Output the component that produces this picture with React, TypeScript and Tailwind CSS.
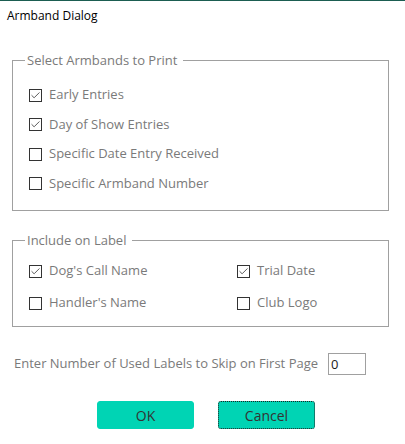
import { Check } from "lucide-react"

const ARMBAND_OPTIONS = [
  { label: "Early Entries", checked: true },
  { label: "Day of Show Entries", checked: true },
  { label: "Specific Date Entry Received", checked: false },
  { label: "Specific Armband Number", checked: false },
]

const LABEL_OPTIONS = [
  { label: "Dog's Call Name", checked: true },
  { label: "Trial Date", checked: true },
  { label: "Handler's Name", checked: false },
  { label: "Club Logo", checked: false },
]

const Box = ({ checked }: { checked: boolean }) => (
  <span className="flex h-[13px] w-[13px] shrink-0 items-center justify-center border border-[#333333] bg-white">
    {checked && <Check className="h-[11px] w-[11px] text-[#333333]" strokeWidth={1.75} />}
  </span>
)

const Option = ({ label, checked }: { label: string; checked: boolean }) => (
  <label className="flex h-[20px] items-center gap-[7px]">
    <Box checked={checked} />
    <span>{label}</span>
  </label>
)

export default function App() {
  return (
    <div
      className="h-[444px] w-[405px] overflow-hidden border-t border-[#1b5d51] bg-white text-[13px] text-[#7a7a7a]"
      style={{ fontFamily: '"Open Sans", "Noto Sans", sans-serif' }}
    >
      <div className="pl-[7px] pt-[7px] text-[12px] leading-[16px] text-black">Armband Dialog</div>

      <fieldset className="mx-[12px] mt-[27px] h-[160px] w-[377px] border border-[#a0a0a0] pl-[16px]">
        <legend className="ml-[-4px] pl-[2px] pr-[6px] leading-[18px]">Select Armbands to Print</legend>
        <div className="mt-[16px] flex flex-col gap-[9.5px]">
          {ARMBAND_OPTIONS.map((o) => (
            <Option key={o.label} {...o} />
          ))}
        </div>
      </fieldset>

      <fieldset className="mx-[12px] mt-[20px] h-[96px] w-[377px] border border-[#a0a0a0] pl-[16px]">
        <legend className="ml-[-4px] pl-[2px] pr-[6px] leading-[18px]">Include on Label</legend>
        <div className="mt-[12px] grid grid-cols-[208px_1fr] gap-y-[12px]">
          {LABEL_OPTIONS.map((o) => (
            <Option key={o.label} {...o} />
          ))}
        </div>
      </fieldset>

      <div className="mt-[26px] flex items-center pl-[14px]">
        <span>Enter Number of Used Labels to Skip on First Page</span>
        <input
          readOnly
          value="0"
          className="ml-[10px] h-[22px] w-[38px] border border-[#a0a0a0] px-[2px] text-[13px] text-[#1a1a1a] outline-none"
        />
      </div>

      <div className="mt-[26px] flex gap-[24px] pl-[97px]">
        <button className="h-[28px] w-[97px] rounded-[3px] border border-[#00d4b4] bg-[#00d4b4] text-[14px] text-[#333333]">
          OK
        </button>
        <button className="h-[28px] w-[97px] rounded-[3px] border border-dotted border-[#222222] bg-[#00d4b4] text-[14px] text-[#333333]">
          Cancel
        </button>
      </div>
    </div>
  )
}
